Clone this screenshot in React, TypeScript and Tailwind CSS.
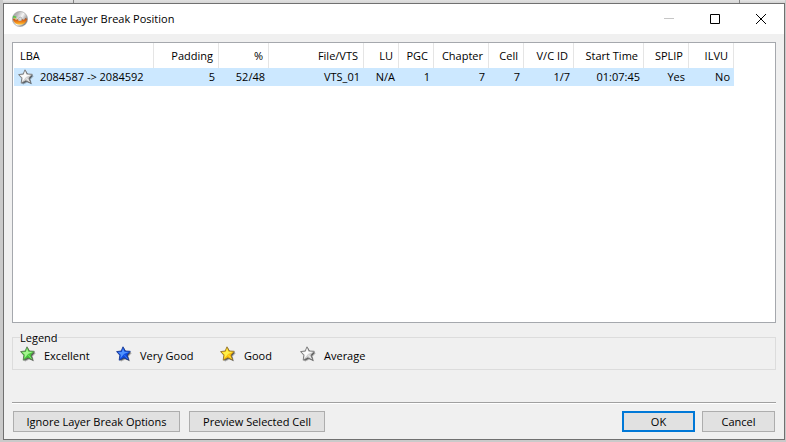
import React, { useState } from 'react';

type Column = { label: string; value: string; width: string };

const columns: Column[] = [
  { label: 'Padding', value: '5', width: 'w-[65px]' },
  { label: '%', value: '52/48', width: 'w-[50px]' },
  { label: 'File/VTS', value: 'VTS_01', width: 'w-[95px]' },
  { label: 'LU', value: 'N/A', width: 'w-[35px]' },
  { label: 'PGC', value: '1', width: 'w-[35px]' },
  { label: 'Chapter', value: '7', width: 'w-[55px]' },
  { label: 'Cell', value: '7', width: 'w-[35px]' },
  { label: 'V/C ID', value: '1/7', width: 'w-[50px]' },
  { label: 'Start Time', value: '01:07:45', width: 'w-[70px]' },
  { label: 'SPLIP', value: 'Yes', width: 'w-[45px]' },
  { label: 'ILVU', value: 'No', width: 'w-[45px]' },
];

type Tone = 'green' | 'blue' | 'gold' | 'silver';

const tones: Record<Tone, { light: string; main: string; edge: string }> = {
  green: { light: '#a6f590', main: '#45c83a', edge: '#5c7a52' },
  blue: { light: '#4f92ff', main: '#0f4be0', edge: '#1a3a94' },
  gold: { light: '#fff04a', main: '#fcbf0a', edge: '#8f7330' },
  silver: { light: '#fafafa', main: '#cfcfcf', edge: '#757575' },
};

const legend: { tone: Tone; label: string; width: string }[] = [
  { tone: 'green', label: 'Excellent', width: 'w-24' },
  { tone: 'blue', label: 'Very Good', width: 'w-[104px]' },
  { tone: 'gold', label: 'Good', width: 'w-20' },
  { tone: 'silver', label: 'Average', width: 'w-24' },
];

function Star({ tone }: { tone: Tone }) {
  const c = tones[tone];
  const shape = 'M7 .8 L9.2 5 L14.3 5.3 L11 9 L12.6 14 L7.8 11.8 L3.2 14.2 L3.8 9.2 L.6 5.6 L5.2 5 Z';
  return (
    <svg width="16" height="16" viewBox="0 0 16 16" className="shrink-0" aria-hidden="true">
      <path d={shape} transform="translate(1.6 1.6)" fill="#000" opacity=".25" />
      <path d={shape} transform="translate(.9 .9)" fill="#000" opacity=".5" />
      <path d={shape} fill={c.main} stroke={c.edge} strokeWidth=".9" strokeLinejoin="round" />
      <path d="M7 2.2 L8.4 5.8 L12.8 6 L8 8 L4.4 12.4 L4.8 8.8 L2 6.2 L5.8 6 Z" fill={c.light} />
      <path d="M8 8.6 L11.6 12.8" stroke={c.light} strokeWidth=".6" />
    </svg>
  );
}

function DiscIcon() {
  return (
    <svg width="16" height="16" viewBox="0 0 16 16" className="shrink-0" aria-hidden="true">
      <defs>
        <linearGradient id="disc" x1="0" y1="0" x2="1" y2=".6">
          <stop offset="0" stopColor="#8a8a8a" />
          <stop offset=".35" stopColor="#bdbdbd" />
          <stop offset=".6" stopColor="#f6f6f6" />
          <stop offset="1" stopColor="#777777" />
        </linearGradient>
        <linearGradient id="flame" x1="0" y1="0" x2="0" y2="1">
          <stop offset="0" stopColor="#9c4a26" />
          <stop offset=".4" stopColor="#e2701a" />
          <stop offset=".75" stopColor="#fba51f" />
          <stop offset="1" stopColor="#ffe896" />
        </linearGradient>
      </defs>
      <circle cx="8" cy="8" r="7.6" fill="url(#disc)" stroke="#9a9a9a" strokeWidth=".6" />
      <path d="M.8 8 L2.4 7.4 L4 9 L5.4 8 L7 10 L9 10 L10.4 8 L12 9 L13.4 7 L15.2 8 A7.3 7.3 0 0 1 .8 8Z" fill="url(#flame)" />
      <circle cx="8.2" cy="7.8" r="1.7" fill="#dcdcdc" stroke="#8d8d8d" strokeWidth=".5" />
      <path d="M1 5.6 L4.2 6.4" stroke="#55c24e" strokeWidth="1.8" />
      <path d="M2 7.2 L4.4 7.4" stroke="#e8d23c" strokeWidth=".8" />
    </svg>
  );
}

function TitleBar() {
  return (
    <header className="flex h-[30px] shrink-0 items-center bg-white pl-2">
      <DiscIcon />
      <h1 className="ml-[5px] flex-1">Create Layer Break Position</h1>
      <button disabled aria-label="Minimize" className="flex h-full w-[46px] items-center justify-center text-[#c6c6c6]">
        <svg width="10" height="10" viewBox="0 0 10 10" stroke="currentColor"><path d="M0 4.5H10" /></svg>
      </button>
      <button aria-label="Maximize" className="flex h-full w-[46px] items-center justify-center">
        <svg width="10" height="10" viewBox="0 0 10 10" fill="none" stroke="currentColor"><path d="M.5 .5H9.5V9.5H.5Z" /></svg>
      </button>
      <button aria-label="Close" className="flex h-full w-[46px] items-center justify-center">
        <svg width="10" height="10" viewBox="0 0 10 10" fill="none" stroke="currentColor"><path d="M0 0L10 10M10 0L0 10" /></svg>
      </button>
    </header>
  );
}

function BreakTable() {
  const [selected, setSelected] = useState(true);

  return (
    <div className="min-h-0 flex-1 overflow-hidden border border-[#a5a8ad] bg-white pl-px">
      <table className="w-[720px] table-fixed border-collapse whitespace-nowrap">
        <thead>
          <tr className="h-[25px]">
            <th className="w-[140px] p-0 font-normal">
              <div className="flex h-[25px] items-center border-r border-[#e5e5e5] pl-1.5">LBA</div>
            </th>
            {columns.map((col) => (
              <th key={col.label} className={`p-0 font-normal ${col.width}`}>
                <div className="flex h-[25px] items-center justify-end border-r border-[#e5e5e5] pr-[5px]">{col.label}</div>
              </th>
            ))}
          </tr>
        </thead>
        <tbody>
          <tr onClick={() => setSelected(!selected)} className={selected ? 'h-[18px] bg-[#cce8ff]' : 'h-[18px]'}>
            <td className="p-0">
              <div className="flex h-[18px] items-center gap-1.5 pl-1">
                <Star tone="silver" />
                2084587 -&gt; 2084592
              </div>
            </td>
            {columns.map((col) => (
              <td key={col.label} className="p-0 pr-1 text-right">{col.value}</td>
            ))}
          </tr>
        </tbody>
      </table>
    </div>
  );
}

function Legend() {
  return (
    <fieldset className="mt-[7px] h-10 shrink-0 border border-[#dcdcdc] pl-[7px]">
      <legend className="h-[15px] leading-4">Legend</legend>
      <div className="flex pt-px">
        {legend.map((item) => (
          <div key={item.label} className={`flex h-5 gap-2 ${item.width}`}>
            <Star tone={item.tone} />
            <span className="leading-5">{item.label}</span>
          </div>
        ))}
      </div>
    </fieldset>
  );
}

function Actions() {
  const button = 'h-[21px] border border-[#adadad] bg-[#e1e1e1] text-center leading-4';
  return (
    <footer className="mt-8 shrink-0 border-t border-[#a0a0a0]">
      <div className="flex justify-between border-t border-white px-px pt-[7px]">
        <div className="flex gap-[9px]">
          <button className={`w-[167px] ${button}`}>Ignore Layer Break Options</button>
          <button className={`w-[136px] ${button}`}>Preview Selected Cell</button>
        </div>
        <div className="flex gap-[7px]">
          <button className="h-[21px] w-[73px] border-2 border-[#0078d7] bg-[#e1e1e1] text-center leading-4">OK</button>
          <button className={`w-[73px] ${button}`}>Cancel</button>
        </div>
      </div>
    </footer>
  );
}

export default function App() {
  return (
    <div className="flex h-screen flex-col bg-[#cacaca] pr-px pb-0.5 pl-[3px] font-['Open_Sans','Segoe_UI',sans-serif] text-[11px] leading-4 text-black">
      {/* Top edge of the parent window */}
      <div className="flex h-[3px] shrink-0 bg-linear-to-b from-[#e6e6e6] to-[#d2d2d2] pr-[45px] pl-[70px]">
        <div className="flex-1 border-x border-[#858585] bg-linear-to-b from-[#e0e0e0] to-[#d6d6d6]" />
      </div>
      <section className="flex min-h-0 flex-1 flex-col border border-[#707070] bg-[#f0f0f0]">
        <TitleBar />
        <main className="flex min-h-0 flex-1 flex-col px-2 pt-2 pb-[7px]">
          <BreakTable />
          <Legend />
          <Actions />
        </main>
      </section>
    </div>
  );
}
